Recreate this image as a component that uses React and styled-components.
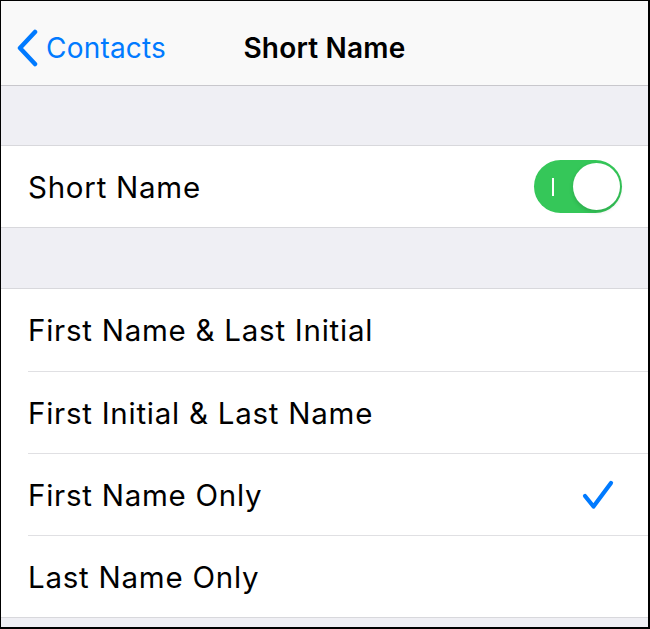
import React from "react";
import styled, { createGlobalStyle } from "styled-components";

const GlobalStyle = createGlobalStyle`
  html, body {
    margin: 0;
    padding: 0;
    background: #000;
  }
  body {
    font-family: Inter, "Noto Sans", sans-serif;
    -webkit-font-smoothing: antialiased;
  }
`;

const Screen = styled.div`
  width: 650px;
  height: 629px;
  box-sizing: border-box;
  border-style: solid;
  border-color: #000;
  border-width: 1px 2px 2px 1px;
  background: #efeff4;
  overflow: hidden;
  display: flex;
  flex-direction: column;
`;

const NavBar = styled.div`
  height: 84px;
  flex-shrink: 0;
  background: #f9f9f9;
  border-bottom: 1px solid #c8c7cc;
  display: grid;
  grid-template-columns: 1fr auto 1fr;
  align-items: center;
`;

const BackButton = styled.div`
  display: flex;
  align-items: center;
  gap: 8px;
  padding-left: 15px;
  padding-top: 9px;
  color: #007aff;
  font-size: 28px;
  letter-spacing: 0.2px;
`;

const Title = styled.div`
  font-size: 28px;
  font-weight: 600;
  color: #000;
  letter-spacing: 0.2px;
  padding-top: 9px;
`;

const Spacer = styled.div`
  height: ${(p) => p.h}px;
  flex-shrink: 0;
`;

const Group = styled.div`
  background: #fff;
  border-top: 1px solid #d8d8dc;
  border-bottom: 1px solid #d8d8dc;
  flex-shrink: 0;
`;

const Row = styled.div`
  height: ${(p) => p.h || 82}px;
  box-sizing: border-box;
  display: flex;
  align-items: center;
  justify-content: space-between;
  padding-left: 27px;
  padding-right: ${(p) => p.pr || 34}px;
  font-size: 29.5px;
  color: #000;
  letter-spacing: 0.75px;

  & + & {
    border-top: 1px solid #e0e0e3;
    margin-left: 27px;
    padding-left: 0;
  }
`;

const Toggle = styled.div`
  width: 88px;
  height: 53px;
  border-radius: 27px;
  background: #35c759;
  position: relative;
  flex-shrink: 0;
`;

const Knob = styled.div`
  position: absolute;
  right: 2px;
  top: 3px;
  width: 47px;
  height: 47px;
  border-radius: 50%;
  background: #fff;
  box-shadow: 0 2px 4px rgba(0, 0, 0, 0.15);
`;

const OnMark = styled.div`
  position: absolute;
  left: 18px;
  top: 18px;
  width: 2px;
  height: 18px;
  background: #fff;
`;

const Chevron = () => (
  <svg width="22" height="38" viewBox="0 0 22 38">
    <path
      d="M19 3 L4 19 L19 35"
      fill="none"
      stroke="#007aff"
      strokeWidth="4.5"
      strokeLinecap="round"
      strokeLinejoin="round"
    />
  </svg>
);

const Check = () => (
  <svg width="32" height="30" viewBox="0 0 32 30">
    <path
      d="M3 16 L11.5 26.5 L29 3"
      fill="none"
      stroke="#007aff"
      strokeWidth="4.2"
      strokeLinecap="round"
      strokeLinejoin="round"
    />
  </svg>
);

const options = [
  "First Name & Last Initial",
  "First Initial & Last Name",
  "First Name Only",
  "Last Name Only",
];

export default function App() {
  const selected = "First Name Only";
  return (
    <>
      <GlobalStyle />
      <Screen>
        <NavBar>
          <BackButton>
            <Chevron />
            Contacts
          </BackButton>
          <Title>Short Name</Title>
          <div />
        </NavBar>
        <Spacer h={59} />
        <Group>
          <Row h={81} pr={26}>
            Short Name
            <Toggle>
              <OnMark />
              <Knob />
            </Toggle>
          </Row>
        </Group>
        <Spacer h={60} />
        <Group>
          {options.map((o) => (
            <Row key={o}>
              {o}
              {o === selected && <Check />}
            </Row>
          ))}
        </Group>
      </Screen>
    </>
  );
}
